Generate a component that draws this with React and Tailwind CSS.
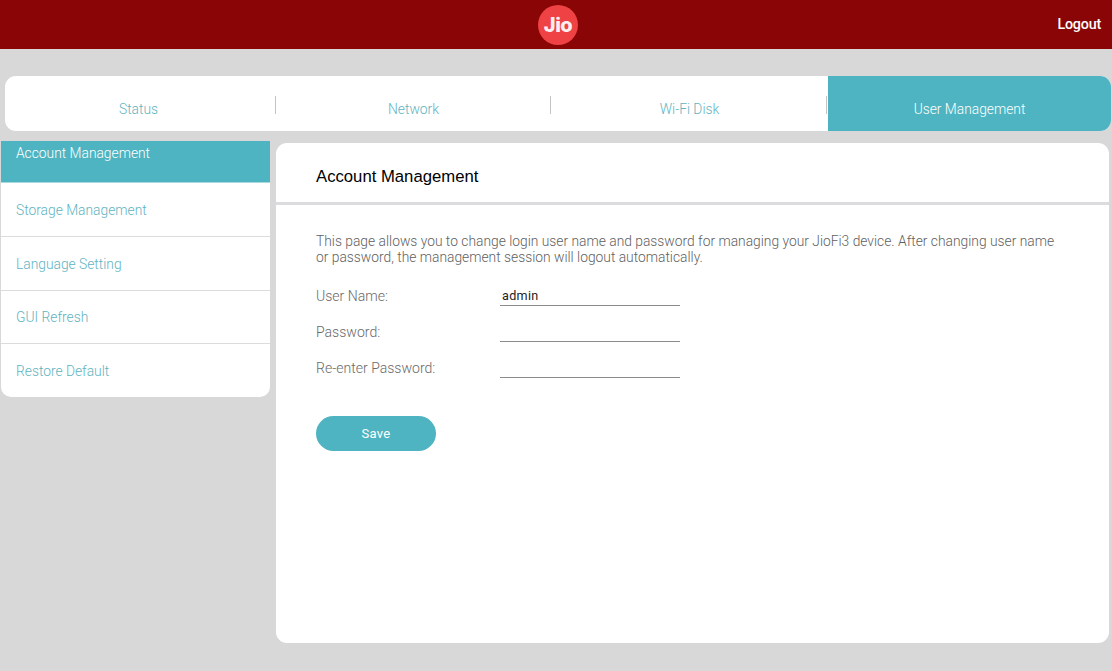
import React from 'react';

const tabs = ['Status', 'Network', 'Wi-Fi Disk'];
const sideItems = [
  { label: 'Storage Management', h: 'h-[54px]', pt: 'pt-[17px]' },
  { label: 'Language Setting', h: 'h-[54px]', pt: 'pt-[17px]' },
  { label: 'GUI Refresh', h: 'h-[53px]', pt: 'pt-[16px]' },
  { label: 'Restore Default', h: 'h-[53px]', pt: 'pt-[17px]' },
];

const Field = ({ label, value }) => (
  <div className="flex h-9 items-start">
    <div className="w-[184px] pt-[1px] text-[14.05px] leading-[20px] text-[#6a6a6a]">{label}</div>
    <div className="h-[21px] w-[180px] border-b border-[#8c8c8c] pl-[2px] font-['Roboto',sans-serif] text-[12.6px] font-normal leading-[22px] tracking-[0.3px] text-[#222]">
      {value}
    </div>
  </div>
);

export default function App() {
  return (
    <div className="h-[671px] w-[1112px] overflow-hidden bg-[#d8d8d9] font-['Roboto',sans-serif] font-light">
      {/* header */}
      <header className="relative flex h-[49px] items-center justify-center bg-[#8a0505]">
        <div className="ml-[4px] flex h-10 w-10 items-center justify-center rounded-full bg-[#ee4244] font-['Inter',sans-serif] text-[20px] font-extrabold tracking-[-0.5px] text-[#fbeef0]">
          Jio
        </div>
        <span className="absolute right-[11px] top-[15px] font-['Roboto',sans-serif] text-[14.3px] font-medium leading-[18px] tracking-[-0.2px] text-white">
          Logout
        </span>
      </header>

      {/* tabs */}
      <nav className="ml-[5px] mt-[27px] flex h-[55px] w-[1106px] overflow-hidden rounded-[11px] bg-white">
        {tabs.map((t, i) => (
          <div key={t} className={`relative flex justify-center pt-[23px] text-[13.8px] leading-[21px] text-[#5fb3bf] ${i === 2 ? 'w-[277px]' : i === 1 ? 'w-[275px]' : 'w-[271px] pr-[4px]'}`}>
            {t}
            <span className={`absolute top-[20px] h-[18px] w-px bg-[#c4c4c4] ${i === 2 ? 'right-[1px]' : 'right-0'}`} />
          </div>
        ))}
        <div className="flex flex-1 justify-center bg-[#4fb4c1] pt-[23px] text-[13.8px] leading-[21px] text-white">
          User Management
        </div>
      </nav>

      <div className="ml-[1px] mt-[10px] flex items-start gap-[6px]">
        {/* sidebar */}
        <aside className="w-[269px] overflow-hidden rounded-b-[10px] bg-white text-[13.8px] leading-[20px] text-[#5fb3bf]">
          <div className="h-[42px] border-b border-[#a9d8de] bg-[#4fb4c1] pl-[15px] pt-[2px] text-white">Account Management</div>
          {sideItems.map((s, i) => (
            <div key={s.label} className={`${s.h} ${s.pt} pl-[15px] ${i < 3 ? 'border-b border-[#dcdcdc]' : ''}`}>
              {s.label}
            </div>
          ))}
        </aside>

        {/* main panel */}
        <main className="mt-[2px] h-[500px] w-[833px] rounded-[11px] bg-white">
          <h1 className="h-[62px] border-b-[3px] border-[#dcdcde] pl-[40px] pt-[23px] font-['Liberation_Sans',sans-serif] text-[16.7px] font-normal leading-[22px] text-black">
            Account Management
          </h1>
          <div className="px-[40px] pt-[28px]">
            <p className="w-[750px] text-[13.82px] leading-[16px] text-[#5f5f5f]">
              This page allows you to change login user name and password for managing your JioFi3 device. After changing user name or password, the management session will logout automatically.
            </p>
            <div className="mt-[20px]">
              <Field label="User Name:" value="admin" />
              <Field label="Password:" />
              <Field label="Re-enter Password:" />
            </div>
            <button className="mt-[23px] block h-[35px] w-[120px] rounded-full bg-[#4fb4c1] font-['Roboto',sans-serif] text-[13px] font-normal tracking-[0.3px] text-white">
              Save
            </button>
          </div>
        </main>
      </div>
    </div>
  );
}
